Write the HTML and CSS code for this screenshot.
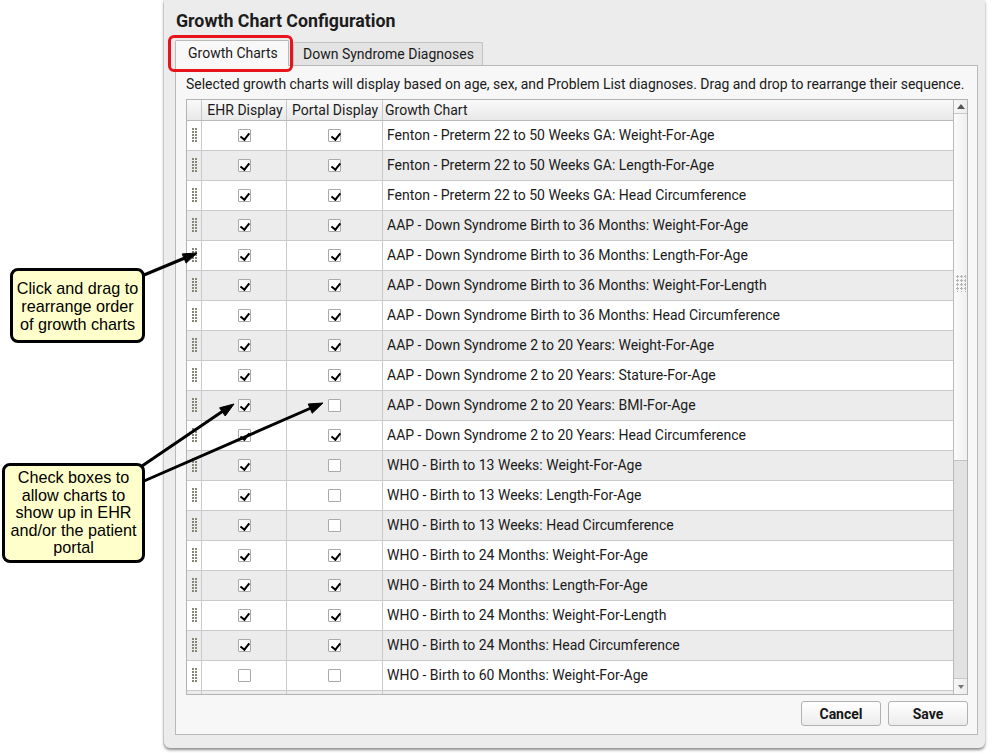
FILE: index.html
```html
<!DOCTYPE html>
<html>
<head>
<meta charset="utf-8">
<link rel="stylesheet" href="styles.css">
</head>
<body>
<div class="stage">
  <div class="dialog">
    <h1 class="title">Growth Chart Configuration</h1>
    <div class="tabs">
      <div class="tab active">Growth Charts</div>
      <div class="tab">Down Syndrome Diagnoses</div>
    </div>
    <div class="panel">
      <p class="desc">Selected growth charts will display based on age, sex, and Problem List diagnoses. Drag and drop to rearrange their sequence.</p>
      <div class="grid">
        <div class="table">
          <div class="row head">
            <div class="cell handle"></div>
            <div class="cell ehr">EHR Display</div>
            <div class="cell portal">Portal Display</div>
            <div class="cell name">Growth Chart</div>
          </div>
          <div class="body">
            <div class="row"><div class="cell handle"><span class="grip"></span></div><div class="cell ehr"><span class="cb on"></span></div><div class="cell portal"><span class="cb on"></span></div><div class="cell name">Fenton - Preterm 22 to 50 Weeks GA: Weight-For-Age</div></div>
            <div class="row alt"><div class="cell handle"><span class="grip"></span></div><div class="cell ehr"><span class="cb on"></span></div><div class="cell portal"><span class="cb on"></span></div><div class="cell name">Fenton - Preterm 22 to 50 Weeks GA: Length-For-Age</div></div>
            <div class="row"><div class="cell handle"><span class="grip"></span></div><div class="cell ehr"><span class="cb on"></span></div><div class="cell portal"><span class="cb on"></span></div><div class="cell name">Fenton - Preterm 22 to 50 Weeks GA: Head Circumference</div></div>
            <div class="row alt"><div class="cell handle"><span class="grip"></span></div><div class="cell ehr"><span class="cb on"></span></div><div class="cell portal"><span class="cb on"></span></div><div class="cell name">AAP - Down Syndrome Birth to 36 Months: Weight-For-Age</div></div>
            <div class="row"><div class="cell handle"><span class="grip"></span></div><div class="cell ehr"><span class="cb on"></span></div><div class="cell portal"><span class="cb on"></span></div><div class="cell name">AAP - Down Syndrome Birth to 36 Months: Length-For-Age</div></div>
            <div class="row alt"><div class="cell handle"><span class="grip"></span></div><div class="cell ehr"><span class="cb on"></span></div><div class="cell portal"><span class="cb on"></span></div><div class="cell name">AAP - Down Syndrome Birth to 36 Months: Weight-For-Length</div></div>
            <div class="row"><div class="cell handle"><span class="grip"></span></div><div class="cell ehr"><span class="cb on"></span></div><div class="cell portal"><span class="cb on"></span></div><div class="cell name">AAP - Down Syndrome Birth to 36 Months: Head Circumference</div></div>
            <div class="row alt"><div class="cell handle"><span class="grip"></span></div><div class="cell ehr"><span class="cb on"></span></div><div class="cell portal"><span class="cb on"></span></div><div class="cell name">AAP - Down Syndrome 2 to 20 Years: Weight-For-Age</div></div>
            <div class="row"><div class="cell handle"><span class="grip"></span></div><div class="cell ehr"><span class="cb on"></span></div><div class="cell portal"><span class="cb on"></span></div><div class="cell name">AAP - Down Syndrome 2 to 20 Years: Stature-For-Age</div></div>
            <div class="row alt"><div class="cell handle"><span class="grip"></span></div><div class="cell ehr"><span class="cb on"></span></div><div class="cell portal"><span class="cb"></span></div><div class="cell name">AAP - Down Syndrome 2 to 20 Years: BMI-For-Age</div></div>
            <div class="row"><div class="cell handle"><span class="grip"></span></div><div class="cell ehr"><span class="cb on"></span></div><div class="cell portal"><span class="cb on"></span></div><div class="cell name">AAP - Down Syndrome 2 to 20 Years: Head Circumference</div></div>
            <div class="row alt"><div class="cell handle"><span class="grip"></span></div><div class="cell ehr"><span class="cb on"></span></div><div class="cell portal"><span class="cb"></span></div><div class="cell name">WHO - Birth to 13 Weeks: Weight-For-Age</div></div>
            <div class="row"><div class="cell handle"><span class="grip"></span></div><div class="cell ehr"><span class="cb on"></span></div><div class="cell portal"><span class="cb"></span></div><div class="cell name">WHO - Birth to 13 Weeks: Length-For-Age</div></div>
            <div class="row alt"><div class="cell handle"><span class="grip"></span></div><div class="cell ehr"><span class="cb on"></span></div><div class="cell portal"><span class="cb"></span></div><div class="cell name">WHO - Birth to 13 Weeks: Head Circumference</div></div>
            <div class="row"><div class="cell handle"><span class="grip"></span></div><div class="cell ehr"><span class="cb on"></span></div><div class="cell portal"><span class="cb on"></span></div><div class="cell name">WHO - Birth to 24 Months: Weight-For-Age</div></div>
            <div class="row alt"><div class="cell handle"><span class="grip"></span></div><div class="cell ehr"><span class="cb on"></span></div><div class="cell portal"><span class="cb on"></span></div><div class="cell name">WHO - Birth to 24 Months: Length-For-Age</div></div>
            <div class="row"><div class="cell handle"><span class="grip"></span></div><div class="cell ehr"><span class="cb on"></span></div><div class="cell portal"><span class="cb on"></span></div><div class="cell name">WHO - Birth to 24 Months: Weight-For-Length</div></div>
            <div class="row alt"><div class="cell handle"><span class="grip"></span></div><div class="cell ehr"><span class="cb on"></span></div><div class="cell portal"><span class="cb on"></span></div><div class="cell name">WHO - Birth to 24 Months: Head Circumference</div></div>
            <div class="row"><div class="cell handle"><span class="grip"></span></div><div class="cell ehr"><span class="cb"></span></div><div class="cell portal"><span class="cb"></span></div><div class="cell name">WHO - Birth to 60 Months: Weight-For-Age</div></div>
            <div class="row alt"><div class="cell handle"></div><div class="cell ehr"></div><div class="cell portal"></div><div class="cell name"></div></div>
          </div>
        </div>
        <div class="scrollbar">
          <div class="sb-btn up"><span class="tri-up"></span></div>
          <div class="sb-thumb"><span class="sb-grip"></span></div>
          <div class="sb-track"></div>
          <div class="sb-btn down"><span class="tri-down"></span></div>
        </div>
      </div>
      <div class="actions">
        <button class="btn">Cancel</button>
        <button class="btn">Save</button>
      </div>
    </div>
  </div>

  <div class="highlight"></div>
  <div class="callout c1">Click and drag to<br>rearrange order<br>of growth charts</div>
  <div class="callout c2">Check boxes to<br>allow charts to<br>show up in EHR<br>and/or the patient<br>portal</div>

  <svg class="arrows" width="992" height="755" viewBox="0 0 992 755">
    <g stroke="#000" stroke-width="3" stroke-linecap="round" fill="#000">
      <line x1="144" y1="275" x2="186" y2="257.5"/>
      <line x1="142" y1="466" x2="223" y2="411"/>
      <line x1="144" y1="481" x2="311" y2="408"/>
    </g>
    <g fill="#000" stroke="#000" stroke-width="1" stroke-linejoin="round">
      <polygon points="197,253 186.1,263.1 182.2,253.9"/>
      <polygon points="234,404 225.2,416.0 219.6,407.8"/>
      <polygon points="323,403 312.2,413.2 308.2,404.0"/>
    </g>
  </svg>
</div>
</body>
</html>
```

FILE: styles.css
```css
* { box-sizing: border-box; }

html, body {
  margin: 0;
  padding: 0;
  background: #ffffff;
}

body {
  font-family: Roboto, "Liberation Sans", Arial, sans-serif;
  color: #1a1a1a;
}

.stage {
  position: relative;
  width: 992px;
  height: 755px;
  overflow: hidden;
}

/* ---------- dialog ---------- */
.dialog {
  margin-left: 164px;
  width: 821px;
  height: 748px;
  background: #ececec;
  border-radius: 0 0 6px 6px;
  box-shadow: 0 2px 3px rgba(0,0,0,0.45), -1px 0 1px rgba(0,0,0,0.08);
  padding: 11px 7px 0 11px;
  display: flex;
  flex-direction: column;
}

.title {
  margin: 0 0 0 1px;
  font-size: 17.8px;
  line-height: 20px;
  font-weight: 700;
  color: #1c1c1c;
}

.tabs {
  display: flex;
  align-items: flex-end;
  gap: 4px;
  margin-top: 9px;
  height: 25px;
  position: relative;
  z-index: 1;
}

.tab {
  height: 23px;
  padding: 0 11px 0 9px;
  border: 1px solid #c2c2c2;
  border-bottom: none;
  border-radius: 2px 2px 0 0;
  background: #e3e3e3;
  font-size: 14px;
  line-height: 23px;
  color: #1a1a1a;
  white-space: nowrap;
}

.tab.active {
  height: 26px;
  width: 114px;
  padding: 0 0 0 12px;
  background: #f8f8f8;
  border-color: #b9b9b9;
  line-height: 25px;
  margin-bottom: -1px;
}

.tab:not(.active) {
  width: 190px;
}

.panel {
  width: 803px;
  border: 1px solid #b9b9b9;
  background: #f7f7f7;
  padding: 9px 9px 8px 10px;
  display: flex;
  flex-direction: column;
}

.desc {
  margin: 0;
  font-size: 13.95px;
  line-height: 18px;
  color: #1a1a1a;
  white-space: nowrap;
}

/* ---------- grid ---------- */
.grid {
  margin-top: 6px;
  height: 596px;
  border: 1px solid #b3b3b3;
  display: flex;
  background: #fff;
}

.table {
  flex: 1;
  display: flex;
  flex-direction: column;
  min-width: 0;
}

.row {
  display: flex;
  height: 30px;
  border-bottom: 1px solid #cacaca;
  background: #ffffff;
  flex-shrink: 0;
}

.row.alt { background: #ececec; }

.row.head {
  height: 21px;
  border-bottom: 1px solid #b9b9b9;
  background: linear-gradient(#f9f9f9, #e9e9e9);
}

.body {
  flex: 1;
  overflow: hidden;
}

.cell {
  display: flex;
  align-items: center;
  border-right: 1px solid #cacaca;
  font-size: 14px;
  color: #1a1a1a;
  white-space: nowrap;
  padding-bottom: 1px;
}

.head .cell {
  border-right-color: #c6c6c6;
  font-size: 14px;
  padding-bottom: 0;
}

.cell.handle { width: 15px; justify-content: center; }
.cell.ehr { width: 85px; justify-content: center; }
.cell.portal { width: 96px; justify-content: center; }
.cell.name { flex: 1; border-right: none; padding-left: 4px; }
.head .cell.name { padding-left: 2px; }
.head .cell.ehr { padding-left: 2px; }
.head .cell.portal { padding-left: 1px; }

.grip {
  width: 5px;
  height: 14px;
  background-image: radial-gradient(circle at 1px 1px, #85857a 0.9px, transparent 1.1px);
  background-size: 3px 3px;
  margin-left: 1px;
}

.cb {
  position: relative;
  width: 13px;
  height: 13px;
  border: 1px solid #a9a9a9;
  background: #fff;
  border-radius: 1px;
}

.cb.on::after {
  content: "";
  position: absolute;
  left: 3.5px;
  top: 1px;
  width: 3.5px;
  height: 7px;
  border: solid #000;
  border-width: 0 2.2px 2.2px 0;
  transform: rotate(38deg);
}

/* ---------- scrollbar ---------- */
.scrollbar {
  width: 14px;
  border-left: 1px solid #b9b9b9;
  display: flex;
  flex-direction: column;
  background: #e2e2e2;
}

.sb-btn {
  height: 14px;
  display: flex;
  align-items: center;
  justify-content: center;
  background: linear-gradient(90deg, #f7f7f7, #ececec);
}

.sb-btn.up { border-bottom: 1px solid #c9c9c9; }
.sb-btn.down { height: 16px; border-top: 1px solid #c9c9c9; }

.tri-up {
  width: 0; height: 0;
  border-left: 4px solid transparent;
  border-right: 4px solid transparent;
  border-bottom: 5px solid #555;
}

.tri-down {
  width: 0; height: 0;
  border-left: 3px solid transparent;
  border-right: 3px solid transparent;
  border-top: 4px solid #777;
}

.sb-thumb {
  height: 347px;
  border-bottom: 1px solid #c2c2c2;
  background: linear-gradient(90deg, #fbfbfb, #efefef);
  display: flex;
  align-items: center;
  justify-content: center;
}

.sb-grip {
  width: 10px;
  height: 17px;
  background-image: radial-gradient(circle at 1.5px 1.5px, #b4b4b4 1px, transparent 1.3px);
  background-size: 4px 4px;
  margin-top: -7px;
}

.sb-track { flex: 1; background: #e2e2e2; }

/* ---------- buttons ---------- */
.actions {
  margin-top: 6px;
  display: flex;
  justify-content: flex-end;
  gap: 7px;
  padding-right: 0;
}

.btn {
  width: 80px;
  height: 25px;
  border: 1px solid #b1b1b1;
  border-radius: 3px;
  background: linear-gradient(#ffffff, #ececec);
  font-family: Roboto, "Liberation Sans", Arial, sans-serif;
  font-size: 14px;
  font-weight: 700;
  color: #151515;
  padding: 0;
}

/* ---------- annotations ---------- */
.highlight {
  position: absolute;
  left: 168px;
  top: 35px;
  width: 125px;
  height: 37px;
  border: 3px solid #e8141b;
  border-radius: 6px;
}

.callout {
  position: absolute;
  display: flex;
  align-items: center;
  justify-content: center;
  text-align: center;
  background: #ffffcc;
  border: 3px solid #000;
  border-radius: 8px;
  font-family: "Liberation Sans", Arial, sans-serif;
  font-size: 16.2px;
  color: #000;
}

.c1 {
  left: 10px;
  top: 268px;
  width: 135px;
  height: 75px;
  line-height: 18px;
}

.c2 {
  left: 2px;
  top: 463px;
  width: 143px;
  height: 100px;
  line-height: 17.5px;
}

.arrows {
  position: absolute;
  left: 0;
  top: 0;
  pointer-events: none;
}
```
